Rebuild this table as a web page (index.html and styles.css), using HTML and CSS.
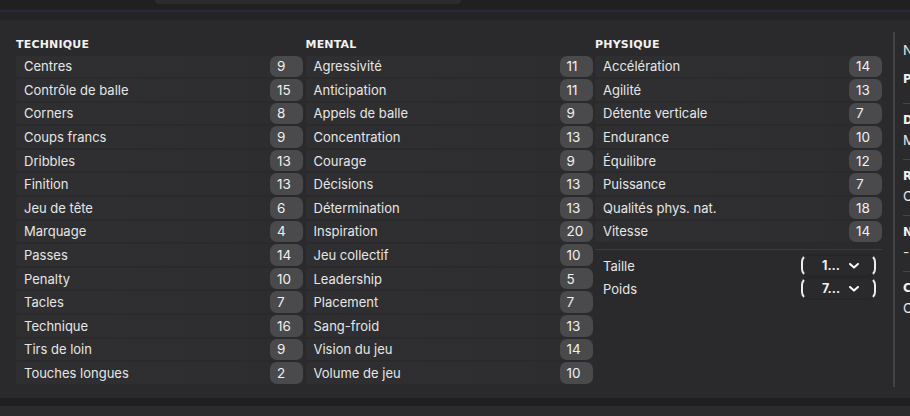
FILE: index.html
```html
<!DOCTYPE html>
<html lang="fr">
<head>
<meta charset="utf-8">
<title>Attributs</title>
<link rel="stylesheet" href="styles.css">
</head>
<body>
<div class="topbar"><div class="search"></div></div>
<div class="accent"></div>
<div class="gapbar"></div>
<main class="panel">
  <section class="attrs">
    <div class="col">
      <h2 class="col-title">TECHNIQUE</h2>
      <div class="row"><span class="lbl">Centres</span><span class="val">9</span></div>
      <div class="row"><span class="lbl">Contrôle de balle</span><span class="val">15</span></div>
      <div class="row"><span class="lbl">Corners</span><span class="val">8</span></div>
      <div class="row"><span class="lbl">Coups francs</span><span class="val">9</span></div>
      <div class="row"><span class="lbl">Dribbles</span><span class="val">13</span></div>
      <div class="row"><span class="lbl">Finition</span><span class="val">13</span></div>
      <div class="row"><span class="lbl">Jeu de tête</span><span class="val">6</span></div>
      <div class="row"><span class="lbl">Marquage</span><span class="val">4</span></div>
      <div class="row"><span class="lbl">Passes</span><span class="val">14</span></div>
      <div class="row"><span class="lbl">Penalty</span><span class="val">10</span></div>
      <div class="row"><span class="lbl">Tacles</span><span class="val">7</span></div>
      <div class="row"><span class="lbl">Technique</span><span class="val">16</span></div>
      <div class="row"><span class="lbl">Tirs de loin</span><span class="val">9</span></div>
      <div class="row"><span class="lbl">Touches longues</span><span class="val">2</span></div>
    </div>
    <div class="col">
      <h2 class="col-title">MENTAL</h2>
      <div class="row"><span class="lbl">Agressivité</span><span class="val">11</span></div>
      <div class="row"><span class="lbl">Anticipation</span><span class="val">11</span></div>
      <div class="row"><span class="lbl">Appels de balle</span><span class="val">9</span></div>
      <div class="row"><span class="lbl">Concentration</span><span class="val">13</span></div>
      <div class="row"><span class="lbl">Courage</span><span class="val">9</span></div>
      <div class="row"><span class="lbl">Décisions</span><span class="val">13</span></div>
      <div class="row"><span class="lbl">Détermination</span><span class="val">13</span></div>
      <div class="row"><span class="lbl">Inspiration</span><span class="val">20</span></div>
      <div class="row"><span class="lbl">Jeu collectif</span><span class="val">10</span></div>
      <div class="row"><span class="lbl">Leadership</span><span class="val">5</span></div>
      <div class="row"><span class="lbl">Placement</span><span class="val">7</span></div>
      <div class="row"><span class="lbl">Sang-froid</span><span class="val">13</span></div>
      <div class="row"><span class="lbl">Vision du jeu</span><span class="val">14</span></div>
      <div class="row"><span class="lbl">Volume de jeu</span><span class="val">10</span></div>
    </div>
    <div class="col">
      <h2 class="col-title">PHYSIQUE</h2>
      <div class="row"><span class="lbl">Accélération</span><span class="val">14</span></div>
      <div class="row"><span class="lbl">Agilité</span><span class="val">13</span></div>
      <div class="row"><span class="lbl">Détente verticale</span><span class="val">7</span></div>
      <div class="row"><span class="lbl">Endurance</span><span class="val">10</span></div>
      <div class="row"><span class="lbl">Équilibre</span><span class="val">12</span></div>
      <div class="row"><span class="lbl">Puissance</span><span class="val">7</span></div>
      <div class="row"><span class="lbl">Qualités phys. nat.</span><span class="val">18</span></div>
      <div class="row"><span class="lbl">Vitesse</span><span class="val">14</span></div>
      <div class="measures">
        <div class="mrow"><span class="lbl">Taille</span>
          <button class="select"><span>1...</span><svg class="chev" viewBox="0 0 10 6" width="10" height="6"><path d="M1 1l4 3.6L9 1" fill="none" stroke="#fff" stroke-width="2" stroke-linecap="round" stroke-linejoin="round"/></svg></button>
        </div>
        <div class="mrow"><span class="lbl">Poids</span>
          <button class="select"><span>7...</span><svg class="chev" viewBox="0 0 10 6" width="10" height="6"><path d="M1 1l4 3.6L9 1" fill="none" stroke="#fff" stroke-width="2" stroke-linecap="round" stroke-linejoin="round"/></svg></button>
        </div>
      </div>
    </div>
  </section>
  <div class="vdivider"></div>
  <aside class="side">
    <div class="side-top">
      <div class="sv">Nom</div>
      <div class="sh">Poste</div>
    </div>
    <div class="sec"><div class="sh">Date de naissance</div><div class="sv">M...</div></div>
    <div class="sec"><div class="sh">Rôle</div><div class="sv">O...</div></div>
    <div class="sec"><div class="sh">Nationalité</div><div class="sv">-</div></div>
    <div class="sec"><div class="sh">Club</div><div class="sv">O...</div></div>
  </aside>
</main>
<div class="footer-dark"></div>
<div class="footer"></div>
</body>
</html>
```
FILE: styles.css
```css
* { box-sizing: border-box; }
html, body { margin: 0; padding: 0; }
body {
  width: 910px;
  height: 416px;
  overflow: hidden;
  background: #2a2a2c;
  font-family: Inter, "Liberation Sans", sans-serif;
  color: #e8e8e8;
}
.topbar {
  height: 10px;
  background: #202022;
}
.search {
  margin-left: 155px;
  width: 306px;
  height: 4px;
  background: #2b2b2d;
  border-radius: 0 0 4px 4px;
}
.accent {
  height: 2px;
  background: #262a3a;
}
.gapbar {
  height: 8px;
  background: #242426;
}
.panel {
  height: 378px;
  display: flex;
  background: #2a2a2c;
  padding-top: 17px;
}
.attrs {
  flex: 0 0 887px;
  display: grid;
  grid-template-columns: 287px 287px 287px;
  column-gap: 2.5px;
  align-content: start;
  padding-left: 16px;
}
.col {
  display: flex;
  flex-direction: column;
  gap: 2px;
}
.col-title {
  margin: 0 0 0.5px;
  height: 16px;
  line-height: 16px;
  font-family: "DejaVu Sans", sans-serif;
  font-weight: 700;
  font-size: 11px;
  letter-spacing: 0.2px;
  color: #f2f2f2;
}
.row {
  height: 21.6px;
  display: flex;
  align-items: center;
  justify-content: space-between;
  background: linear-gradient(90deg, #2f2f31 0%, #2e2e30 70%, #2c2c2e 100%);
  border-radius: 3px 0 0 3px;
}
.lbl {
  padding-left: 8px;
  font-size: 13px;
  color: #e6e6e6;
}
.val {
  width: 33px;
  height: 100%;
  display: flex;
  align-items: center;
  padding-left: 7px;
  background: #4a4a4c;
  border-radius: 7px;
  font-size: 13.5px;
  color: #f0f0f0;
}
.measures {
  margin-top: 5px;
  border-top: 1px solid #3c3c3e;
  padding-top: 4px;
  padding-right: 6px;
  display: flex;
  flex-direction: column;
}
.mrow {
  height: 23px;
  display: flex;
  align-items: center;
  justify-content: space-between;
}
.select {
  width: 75px;
  height: 23px;
  display: flex;
  align-items: center;
  justify-content: center;
  gap: 9px;
  padding: 0 0 0 4px;
  background: transparent;
  border: 2px solid;
  border-color: #262628 #ececec;
  border-radius: 8px;
  font-family: Inter, sans-serif;
  font-weight: 700;
  font-size: 12.5px;
  color: #f2f2f2;
}
.chev { display: block; }
.vdivider {
  flex: 0 0 2px;
  height: 355px;
  margin-top: -5px;
  background: #434345;
  margin-left: 6px;
}
.side {
  flex: 0 0 15px;
  margin-left: 8px;
  overflow: hidden;
  white-space: nowrap;
}
.side-top {
  height: 66px;
  padding-top: 1px;
}
.side-top .sv { height: 24px; line-height: 18px; }
.side-top .sh { margin-top: 6px; }
.sec {
  height: 56px;
  border-top: 1px solid #464648;
  padding-top: 8px;
}
.sh {
  font-family: "DejaVu Sans", sans-serif;
  font-weight: 700;
  font-size: 11.5px;
  line-height: 16px;
  color: #f2f2f2;
}
.sv {
  margin-top: 3px;
  font-size: 13.5px;
  line-height: 18px;
  color: #e6e6e6;
}
.footer-dark {
  height: 8px;
  background: #1f1f21;
}
.footer {
  height: 10px;
  background: #2b2b2d;
}
```
